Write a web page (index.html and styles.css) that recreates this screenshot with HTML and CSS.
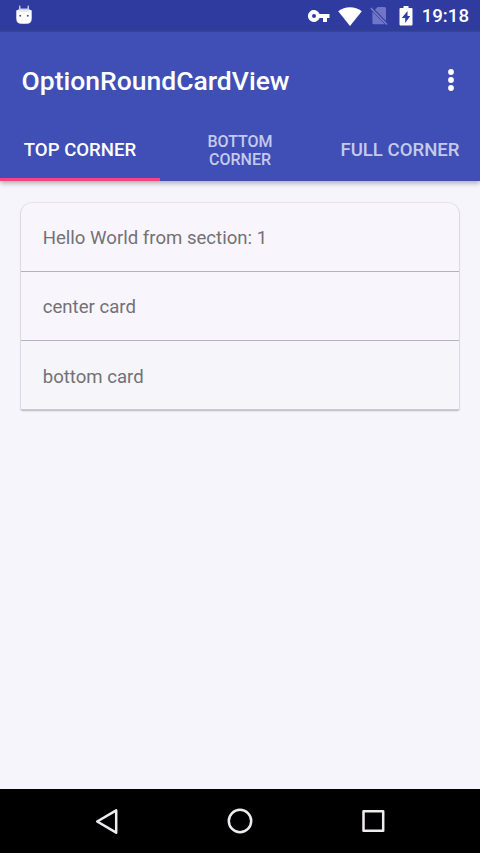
FILE: index.html
```html
<!DOCTYPE html>
<html lang="en">
<head>
<meta charset="utf-8">
<title>OptionRoundCardView</title>
<link rel="stylesheet" href="styles.css">
</head>
<body>
<div class="screen">
  <header class="appbar">
    <div class="status">
      <svg class="bug" width="16" height="20" viewBox="0 0 16 20"><path d="M3.800 1v4M12.200 1v4" stroke="#e4e6fa" stroke-width="1.200" stroke-linecap="round"/><path d="M3 3.500h10l1 1.500H2z" fill="#c9ceef"/><path d="M.3 6Q.3 5 1.300 5h13.400q1 0 1 1v7.500q0 5.300-5.200 5.300h-5Q.3 18.800.3 13.500z" fill="#fff"/><path d="M2.500 6h11" stroke="#d3d2e6"/><circle cx="4.200" cy="10.800" r="1" fill="#4554b2"/><circle cx="11.800" cy="10.800" r="1" fill="#4554b2"/></svg>
      <div class="tray">
        <svg width="22" height="12" viewBox="0 0 22 12"><path fill="#fff" fill-rule="evenodd" d="M11.600 4A6 6 0 1 0 11.600 8H15v4h4V8h2.500V4zM6 8a2 2 0 1 1 0-4 2 2 0 0 1 0 4z"/></svg>
        <svg width="24" height="19" viewBox="0 0 24 19"><path fill="#fff" d="M12 19 .2 4.200Q5.500.2 12 .2t11.800 4z"/></svg>
        <svg width="18" height="20" viewBox="0 0 18 20"><path fill="#6f76c5" d="M7.500 1h7q1.500 0 1.500 1.500V15L5 3.700zM2.400 5.500 15 18.200H3.800q-1.400 0-1.400-1.500z"/><path d="M.8 2 17 18.600" stroke="#7b82cb" stroke-width="1.400"/></svg>
        <svg width="14" height="20" viewBox="0 0 14 20"><path fill="#fff" fill-rule="evenodd" d="M4.500 0h5v2H12.500q1 0 1 1v15.500q0 1-1 1h-11q-1 0-1-1V3q0-1 1-1h3zM8.500 5 2.800 12h3.400v5L11.200 10H8.500z"/></svg>
        <span class="clock">19:18</span>
      </div>
    </div>
    <div class="toolbar">
      <h1>OptionRoundCardView</h1>
      <svg width="8" height="22" viewBox="0 0 8 22" fill="#fff"><circle cx="4" cy="3" r="2.900"/><circle cx="4" cy="11" r="2.900"/><circle cx="4" cy="19" r="2.900"/></svg>
    </div>
    <nav class="tabs">
      <div class="tab active">TOP CORNER</div>
      <div class="tab two-line">BOTTOM<br>CORNER</div>
      <div class="tab">FULL CORNER</div>
    </nav>
  </header>
  <main>
    <div class="cards">
      <div class="card">Hello World from section: 1</div>
      <div class="card">center card</div>
      <div class="card">bottom card</div>
    </div>
  </main>
  <footer class="navbar">
    <svg width="28" height="28" viewBox="0 0 28 28"><path d="M23.200 3.300v22.400L4.200 14.500z"/></svg>
    <svg width="28" height="28" viewBox="0 0 28 28"><circle cx="14" cy="14" r="11.200"/></svg>
    <svg width="28" height="28" viewBox="0 0 28 28"><path d="M4.500 4.200h19.700v19.500H4.500z"/></svg>
  </footer>
</div>
</body>
</html>
```
FILE: styles.css
```css
* { box-sizing: border-box; }
body { margin: 0; font-family: Roboto, "Liberation Sans", sans-serif; }
svg { display: block; }
.screen { width: 480px; height: 853px; display: flex; flex-direction: column; background: #f7f5fc; }
.appbar { height: 181px; background: #3f4fb5; color: #fff; box-shadow: 0 2px 5px rgba(0, 0, 0, .32); }
.status { height: 32px; padding: 0 11px 0 16px; display: flex; justify-content: space-between; align-items: center; background: linear-gradient(#303b9f 27px, #303f94 31px, #394aaa); }
.bug { margin-top: -3px; }
.tray { display: flex; align-items: center; }
.tray svg:nth-child(2) { margin-left: 8px; }
.tray svg:nth-child(3) { margin-left: 8px; }
.tray svg:nth-child(4) { margin-left: 11px; }
.clock { margin-left: 9px; font-size: 18.670px; font-weight: 500; line-height: 32px; }
.toolbar { height: 85px; padding: 11px 25px 0 21.500px; display: flex; justify-content: space-between; align-items: center; }
h1 { margin: 2px 0 0; font-size: 26.500px; font-weight: 500; line-height: 32px; }
.toolbar svg { margin-top: -1px; }
.tabs { height: 64px; display: grid; grid-template-columns: repeat(3, 1fr); }
.tab { display: flex; align-items: center; justify-content: center; text-align: center; font-size: 18.600px; line-height: 22px; font-weight: 500; color: #c5caed; border-bottom: 3px solid transparent; padding-top: 5px; }
.tab.active { color: #fff; border-color: #f9418a; }
.two-line { font-size: 16px; line-height: 18px; padding-top: 6px; }
main { flex: 1; padding: 22px 21px; }
.cards { border-radius: 11px 11px 1px 1px; box-shadow: 0 0 0 1px rgba(0, 0, 0, .06), 0 1px 2px rgba(0, 0, 0, .2); background: #f8f6fc; }
.card { height: 69px; padding: 2px 21.700px 0; display: flex; align-items: center; font-size: 18.600px; color: #737176; border-bottom: 1px solid #b5b3ba; }
.card:last-child { padding-top: 3px; border-bottom-color: #ccc9d1; background: #f6f5fa; }
.navbar { height: 64px; padding: 0 93px; display: flex; justify-content: space-between; align-items: center; background: #000; }
.navbar svg { fill: none; stroke: #eeecf1; stroke-width: 2.500; stroke-linejoin: round; }
```
